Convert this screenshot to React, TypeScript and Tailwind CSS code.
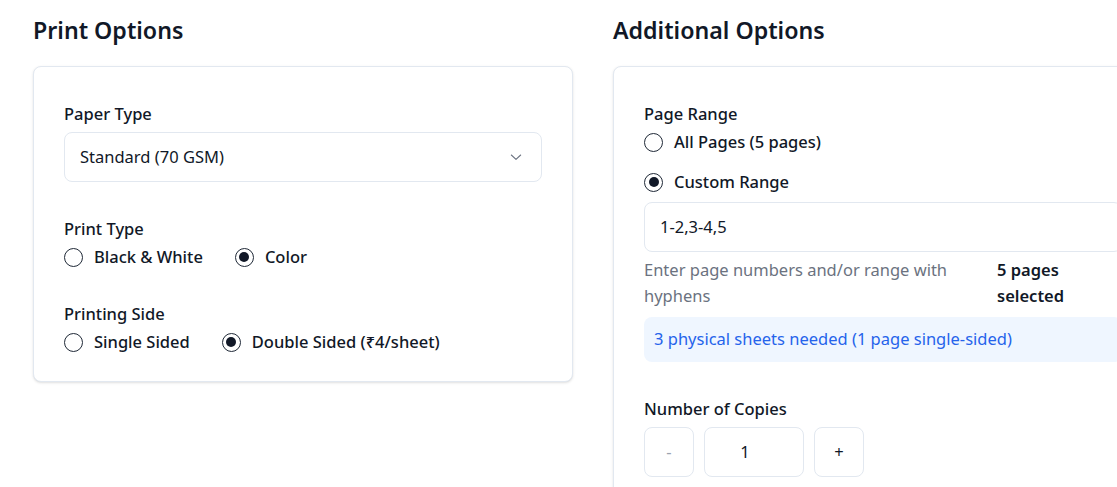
import React from "react";

function Radio({ checked, label }: { checked?: boolean; label: string }) {
  return (
    <label className="flex items-center gap-[11px] h-6">
      <span className="flex h-[19px] w-[19px] items-center justify-center rounded-full border-[1.5px] border-[#1f2937] bg-white">
        {checked && <span className="h-[10px] w-[10px] rounded-full bg-[#111827]" />}
      </span>
      <span className="text-[16.5px] font-medium text-[#111827]">{label}</span>
    </label>
  );
}

function Label({ children }: { children: React.ReactNode }) {
  return <div className="h-6 text-[16.5px] font-medium leading-6 text-[#111827]">{children}</div>;
}

export default function App() {
  return (
    <div
      className="h-[487px] w-[1117px] overflow-hidden bg-white"
      style={{ fontFamily: '"Noto Sans", "Open Sans", sans-serif' }}
    >
      <div className="flex w-[1160px] gap-[40px] pl-[33px] pt-[14px]">
        {/* Left column */}
        <section className="w-[540px] shrink-0">
          <h2 className="h-8 text-[23.2px] font-semibold leading-8 text-[#111827]">Print Options</h2>
          <div className="mt-[20px] rounded-lg border border-[#e2e8f0] bg-white px-[30px] pb-[27px] pt-[35px] shadow-sm">
            <Label>Paper Type</Label>
            <div className="mt-[6px] flex h-[50px] items-center justify-between rounded-lg border border-[#e2e8f0] pl-[15px] pr-[17px]">
              <span className="text-[16.5px] text-[#111827]">Standard (70 GSM)</span>
              <svg width="16" height="16" viewBox="0 0 24 24" fill="none" stroke="#6b7280" strokeWidth="1.6" strokeLinecap="round" strokeLinejoin="round">
                <path d="M5 9l7 6.5 7-6.5" />
              </svg>
            </div>

            <div className="mt-[35px]">
              <Label>Print Type</Label>
              <div className="mt-[4px] flex items-center gap-[32px]">
                <Radio label="Black & White" />
                <Radio checked label="Color" />
              </div>
            </div>

            <div className="mt-[33px]">
              <Label>Printing Side</Label>
              <div className="mt-[4px] flex items-center gap-[32px]">
                <Radio label="Single Sided" />
                <Radio checked label="Double Sided (₹4/sheet)" />
              </div>
            </div>
          </div>
        </section>

        {/* Right column */}
        <section className="w-[540px] shrink-0">
          <h2 className="h-8 text-[23.2px] font-semibold leading-8 text-[#111827]">Additional Options</h2>
          <div className="mt-[20px] h-[460px] rounded-lg border border-[#e2e8f0] bg-white px-[30px] pt-[35px] shadow-sm">
            <Label>Page Range</Label>
            <div className="mt-[4px] flex flex-col gap-[16px]">
              <Radio label="All Pages (5 pages)" />
              <Radio checked label="Custom Range" />
            </div>
            <div className="mt-[8px] flex h-[50px] items-center rounded-lg border border-[#e2e8f0] px-[15px] text-[16.5px] text-[#111827]">
              1-2,3-4,5
            </div>
            <div className="mt-[5px] flex items-start">
              <p className="w-[337px] text-[16.5px] leading-[26px] text-[#6b7280]">
                Enter page numbers and/or range with hyphens
              </p>
              <span className="ml-[16px] w-[90px] text-[16.5px] font-semibold leading-[26px] text-[#111827]">
                5 pages selected
              </span>
            </div>
            <div className="mt-[8px] flex h-[45px] items-center rounded-lg bg-[#eff6ff] px-[10px] text-[16.5px] text-[#2563eb]">
              3 physical sheets needed (1 page single-sided)
            </div>

            <div className="mt-[35px]">
              <Label>Number of Copies</Label>
              <div className="mt-[6px] flex gap-[10px]">
                <button className="flex h-[50px] w-[50px] items-center justify-center rounded-lg border border-[#e2e8f0] bg-white text-[16.5px] text-[#9ca3af]">
                  -
                </button>
                <div className="flex h-[50px] w-[100px] items-center justify-center rounded-lg border border-[#e2e8f0] pr-[18px] text-[16.5px] text-[#111827]">
                  1
                </div>
                <button className="flex h-[50px] w-[50px] items-center justify-center rounded-lg border border-[#e2e8f0] bg-white text-[16.5px] text-[#111827]">
                  +
                </button>
              </div>
            </div>
          </div>
        </section>
      </div>
    </div>
  );
}
